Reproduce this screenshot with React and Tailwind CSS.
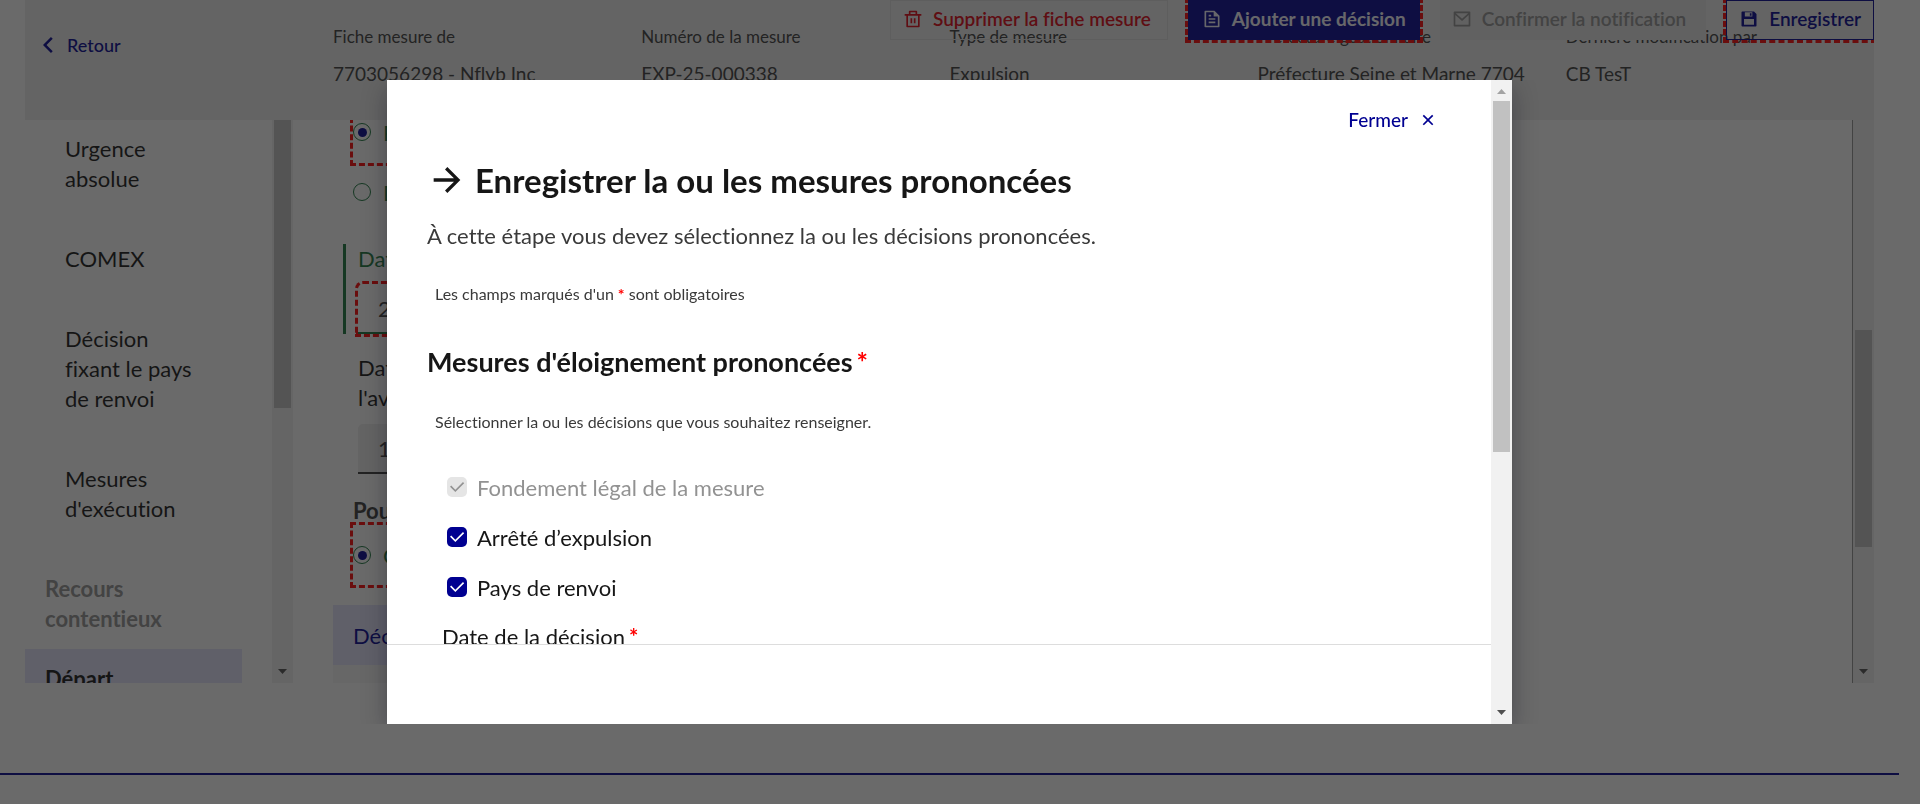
import React from "react";
import {
  RiArrowLeftSLine,
  RiArrowRightLine,
  RiCloseLine,
  RiDeleteBinLine,
  RiFileTextLine,
  RiMailLine,
  RiSave3Fill,
} from "react-icons/ri";

const FIELDS = [
  ["Fiche mesure de", "7703056298 - Nflyb Inc"],
  ["Numéro de la mesure", "EXP-25-000338"],
  ["Type de mesure", "Expulsion"],
  ["Préfecture gestionnaire", "Préfecture Seine et Marne 7704"],
  ["Dernière modification par", "CB TesT"],
];

const STEPS = ["Urgence absolue", "COMEX", "Décision fixant le pays de renvoi", "Mesures d'exécution"];

function Scrollbar({ top, thumb, showUp }) {
  return (
    <div aria-hidden="true" className="flex w-[21px] shrink-0 flex-col items-center justify-between bg-[#f1f1f1]">
      <div className="flex w-full flex-col items-center">
        {showUp && (
          <svg className="h-[21px] w-[9px]" viewBox="0 0 9 21">
            <path d="M0 14h9L4.500 9z" fill="#a3a3a3" />
          </svg>
        )}
        <div className={`w-[17px] bg-[#c1c1c1] ${top} ${thumb}`} />
      </div>
      <svg className="h-[21px] w-[9px]" viewBox="0 0 9 21">
        <path d="M0 7h9L4.500 12z" fill="#505050" />
      </svg>
    </div>
  );
}

function Radio({ name, label, checked }) {
  return (
    <label className="flex h-[30px] items-center gap-3 text-[22px] text-[#18753c]">
      <input
        type="radio"
        name={name}
        defaultChecked={checked}
        className="grid size-[18px] appearance-none place-items-center rounded-full border border-[#18753c] before:size-[9px] before:rounded-full checked:before:bg-[#000091]"
      />
      {label}
    </label>
  );
}

function Check({ label, disabled }) {
  return (
    <label className={`flex h-[50px] items-center gap-[10px] text-[22px] ${disabled ? "text-[#929292]" : "text-[#161616]"}`}>
      <span className="grid size-5">
        <input
          type="checkbox"
          defaultChecked
          disabled={disabled}
          className="col-start-1 row-start-1 size-5 appearance-none rounded-[5px] bg-[#000091] disabled:bg-[#e5e5e5]"
        />
        <svg
          viewBox="0 0 24 24"
          className={`pointer-events-none col-start-1 row-start-1 size-5 ${disabled ? "text-[#929292]" : "text-white"}`}
          fill="currentColor"
        >
          <path d="m10 15.170 9.190-9.190 1.420 1.410L10 18 3.640 11.640l1.410-1.420z" />
        </svg>
      </span>
      {label}
    </label>
  );
}

function Header() {
  return (
    <header className="relative flex h-[120px] shrink-0 overflow-hidden bg-[#eeeeee]">
      <div className="w-[308px] shrink-0 pt-[30px] pl-2">
        <a href="#retour" className="flex h-[30px] items-center gap-1 text-lg font-medium text-[#000091]">
          <RiArrowLeftSLine className="size-[30px]" />
          Retour
        </a>
      </div>
      <dl className="grid flex-1 grid-cols-5 pt-[25px]">
        {FIELDS.map(([name, value]) => (
          <div key={name} className="whitespace-nowrap">
            <dt className="text-[17px] leading-6 text-[#3a3a3a]">{name}</dt>
            <dd className="mt-[13px] text-[19px] leading-6 text-[#3a3a3a]">{value}</dd>
          </div>
        ))}
      </dl>
      <div className="absolute top-0 right-0 flex h-[40px] gap-5 text-[19px] font-semibold">
        <button type="button" className="flex items-center gap-[10px] border border-[#dddddd] pr-4 pb-[2px] pl-3 text-[#e1000f]">
          <RiDeleteBinLine className="size-5" />
          Supprimer la fiche mesure
        </button>
        <button type="button" className="flex items-center gap-[10px] bg-[#000091] px-[14px] pb-[2px] font-bold text-[#f5f5fe] outline-3 outline-dashed outline-[#ff0000]">
          <RiFileTextLine className="size-5" />
          Ajouter une décision
        </button>
        <button type="button" disabled className="flex items-center gap-[10px] bg-[#e5e5e5] pr-5 pb-[2px] pl-3 text-[#929292]">
          <RiMailLine className="size-5" />
          Confirmer la notification
        </button>
        <button type="button" className="flex items-center gap-[10px] border border-[#000091] px-3 pb-[2px] text-[#000091] outline-3 outline-dashed outline-[#ff0000]">
          <RiSave3Fill className="size-5" />
          Enregistrer
        </button>
      </div>
    </header>
  );
}

function Sidebar() {
  return (
    <div className="flex w-[268px] shrink-0">
      <nav className="flex flex-1 flex-col overflow-hidden pr-[30px] text-[22px] leading-[30px] text-[#161616]">
        <div className="-mt-[11px] flex flex-col">
          {STEPS.map((step) => (
            <a key={step} href="#etape" className="py-[25px] pr-10 pl-10">
              {step}
            </a>
          ))}
        </div>
        <a href="#recours" className="mt-[10px] px-5 py-[15px] font-bold text-[#929292]">
          Recours contentieux
        </a>
        <a href="#depart" className="bg-[#e3e3fd] px-5 py-[15px] font-bold">
          Départ
        </a>
      </nav>
      <Scrollbar top="mt-0" thumb="h-72" />
    </div>
  );
}

function Form() {
  return (
    <main className="ml-10 flex flex-1 overflow-hidden">
      <div className="flex flex-1 flex-col overflow-hidden border-r border-[#929292]">
        <div className="-mt-[3px] ml-[17px] w-[400px] border-b-3 border-l-3 border-dashed border-[#ff0000] pb-4">
          <Radio name="avis" label="Favorable" checked />
        </div>
        <div className="mt-[11px] ml-5">
          <Radio name="avis" label="Défavorable" />
        </div>
        <div className="mt-[37px] ml-[10px] h-[90px] w-[400px] border-l-3 border-[#18753c] pl-3">
          <label htmlFor="date-avis" className="block text-[22px] leading-[30px] text-[#18753c]">
            Date de l'avis
          </label>
          <input
            id="date-avis"
            defaultValue="21/05/2025"
            className="mt-[10px] h-[50px] w-full rounded-t-[5px] border-b-2 border-[#18753c] px-5 text-[22px] text-[#3a3a3a] outline-3 outline-dashed outline-[#ff0000]"
          />
        </div>
        <div className="mt-[19px] ml-[25px] w-[400px]">
          <label htmlFor="date-notif" className="block text-[22px] leading-[30px] text-[#161616]">
            Date de notification de
            <br />
            l'avis de la commission
          </label>
          <input
            id="date-notif"
            defaultValue="12/05/2025"
            className="mt-[11px] h-[50px] w-full rounded-t-[5px] border-b-2 border-[#3a3a3a] bg-[#eeeeee] px-5 text-[22px] text-[#3a3a3a]"
          />
        </div>
        <p className="mt-[22px] ml-5 text-[22px] leading-[30px] font-bold text-[#3a3a3a]">Poursuite de la procédure</p>
        <div className="-mt-1 ml-[17px] w-[400px] border-3 border-dashed border-[#ff0000] py-[15px]">
          <Radio name="poursuite" label="Oui" checked />
        </div>
        <h2 className="mt-[17px] flex h-[60px] w-[800px] shrink-0 items-center bg-[#e3e3fd] pl-5 text-[22px] text-[#000091]">
          Décision
        </h2>
        <div className="w-[800px] flex-1 bg-[#f6f6f6]" />
      </div>
      <Scrollbar top="mt-[210px]" thumb="h-[217px]" />
    </main>
  );
}

function Star() {
  return <span className="ml-1 font-bold text-[#ff0000]">*</span>;
}

function Modal() {
  return (
    <div className="fixed inset-0 flex items-center justify-center bg-[rgba(22,22,22,0.64)] pr-[21px]">
      <div className="flex h-4/5 justify-center overflow-hidden px-8">
        <div
          role="dialog"
          aria-modal="true"
          aria-labelledby="modal-title"
          className="flex w-[1125px] max-w-full bg-white shadow-[0_8px_24px_rgba(0,0,18,0.32)]"
        >
          <div className="flex flex-1 flex-col">
            <div className="flex flex-1 flex-col overflow-hidden px-10 pt-5">
              <button type="button" className="mr-[13px] flex h-10 shrink-0 items-center gap-[10px] self-end text-[19px] font-medium text-[#000091]">
                Fermer
                <RiCloseLine className="size-5" />
              </button>
              <h1 id="modal-title" className="mt-5 flex h-10 shrink-0 items-center gap-2 text-[33px] font-bold text-[#161616]">
                <RiArrowRightLine className="size-10" />
                Enregistrer la ou les mesures prononcées
              </h1>
              <p className="mt-[21px] text-[22px] leading-[30px] text-[#3a3a3a]">
                À cette étape vous devez sélectionnez la ou les décisions prononcées.
              </p>
              <p className="mt-[31px] pl-2 text-base leading-6 text-[#3a3a3a]">
                Les champs marqués d'un
                <Star /> sont obligatoires
              </p>
              <h2 className="mt-[39px] text-[27px] leading-[34px] font-bold text-[#161616]">
                Mesures d'éloignement prononcées
                <Star />
              </h2>
              <p className="mt-[31px] pl-2 text-base leading-6 text-[#3a3a3a]">
                Sélectionner la ou les décisions que vous souhaitez renseigner.
              </p>
              <div className="mt-7 pl-5">
                <Check label="Fondement légal de la mesure" disabled />
                <Check label="Arrêté d’expulsion" />
                <Check label="Pays de renvoi" />
              </div>
              <label htmlFor="date-decision" className="mt-[10px] pl-[15px] text-[22px] leading-[30px] text-[#161616]">
                Date de la décision
                <Star />
              </label>
              <input id="date-decision" className="mt-[10px] ml-[15px] h-[50px] w-80 shrink-0 bg-[#eeeeee]" />
            </div>
            <div className="h-20 shrink-0 border-t border-[#dddddd] bg-white" />
          </div>
          <Scrollbar showUp top="mt-0" thumb="h-[351px]" />
        </div>
      </div>
    </div>
  );
}

export default function App() {
  return (
    <div className="flex h-screen flex-col bg-white pr-[21px] font-[Lato,'Noto_Sans',sans-serif] [font-variant-ligatures:none]">
      <div className="flex min-h-0 flex-1 flex-col px-[25px] pb-[90px]">
        <Header />
        <div className="flex min-h-0 flex-1">
          <Sidebar />
          <Form />
        </div>
      </div>
      <footer className="h-[31px] shrink-0 border-t-2 border-[#000091]" />
      <Modal />
    </div>
  );
}
